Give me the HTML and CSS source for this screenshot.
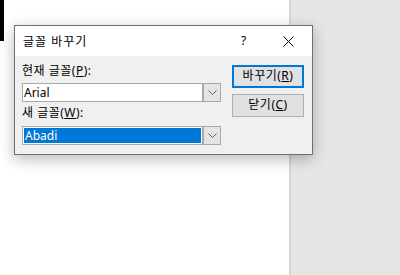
FILE: index.html
```html
<!DOCTYPE html>
<html>

<head>
    <meta charset="utf-8" />
    <title>글꼴 바꾸기</title>
    <link rel="stylesheet" href="styles.css">
</head>

<body>
    <div class="desk">
        <div class="doc">
            <div class="mark"></div>
        </div>
        <div class="side"></div>
    </div>

    <!-- dialog window over the document -->
    <div class="dlg">
        <div class="dlg-title">
            <span class="dlg-name">글꼴 바꾸기</span>
            <span class="dlg-help">?</span>
            <span class="dlg-close">
                <svg width="11" height="11" viewBox="0 0 11 11">
                    <path d="M0.5 0.5 L10.5 10.5 M10.5 0.5 L0.5 10.5" stroke="#000" stroke-width="1" fill="none" />
                </svg>
            </span>
        </div>
        <div class="dlg-body">
            <div class="fields">
                <div class="lbl">현재 글꼴(<u>P</u>):</div>
                <div class="combo">
                    <div class="combo-text">Arial</div>
                    <div class="combo-btn">
                        <svg width="9" height="5" viewBox="0 0 9 5">
                            <path d="M0.5 0.5 L4.5 4.5 L8.5 0.5" stroke="#606060" stroke-width="1" fill="none" />
                        </svg>
                    </div>
                </div>
                <div class="lbl lbl-second">새 글꼴(<u>W</u>):</div>
                <div class="combo">
                    <div class="combo-text"><span class="sel">Abadi</span></div>
                    <div class="combo-btn">
                        <svg width="9" height="5" viewBox="0 0 9 5">
                            <path d="M0.5 0.5 L4.5 4.5 L8.5 0.5" stroke="#606060" stroke-width="1" fill="none" />
                        </svg>
                    </div>
                </div>
            </div>
            <div class="btns">
                <div class="btn btn-default">바꾸기(<u>R</u>)</div>
                <div class="btn">닫기(<u>C</u>)</div>
            </div>
        </div>
    </div>
</body>

</html>
```

FILE: styles.css
```css
body {
    margin: 0;
    font-family: "Noto Sans", "Noto Sans CJK KR", sans-serif;
    font-size: 12px;
    color: #000;
}

.desk {
    display: flex;
    height: 275px;
}

.doc {
    width: 289px;
    background: #fff;
    border-right: 2px solid #d6d6d6;
}

.mark {
    width: 4px;
    height: 41px;
    background: #000;
}

.side {
    flex: 1;
    background: #e6e6e6;
}

/* dialog */
.dlg {
    position: absolute;
    left: 14px;
    top: 25px;
    width: 297px;
    height: 128px;
    border: 1px solid #6f6f6f;
    background: #f0f0f0;
    box-shadow: 0 4px 14px rgba(0, 0, 0, 0.28);
}

.dlg-title {
    display: flex;
    align-items: center;
    height: 30px;
    background: #fff;
    padding-left: 8px;
}

.dlg-name {
    flex: 1;
    line-height: 16px;
    padding-top: 1px;
    letter-spacing: 1px;
}

.dlg-help {
    width: 20px;
    margin-right: 22px;
    line-height: 16px;
}

.dlg-close {
    display: flex;
    width: 11px;
    margin-right: 18px;
}

.dlg-body {
    display: flex;
    gap: 11px;
    padding: 7px 8px 0 7px;
}

.fields {
    width: 199px;
}

.lbl {
    line-height: 16px;
    height: 16px;
    margin-bottom: 4px;
    letter-spacing: 0.5px;
}

.lbl-second {
    margin-top: 3px;
    margin-bottom: 5px;
}

.combo {
    display: flex;
    height: 19px;
    box-sizing: border-box;
    border: 1px solid #a9a9a9;
    background: #fff;
}

.combo-text {
    flex: 1;
    padding: 1px;
    line-height: 15px;
}

.sel {
    display: block;
    background: #0078d7;
    color: #fff;
    height: 15px;
    padding-left: 1px;
}

.combo-btn {
    display: flex;
    align-items: center;
    justify-content: center;
    width: 16px;
    background: #e5e5e5;
    border-left: 2px solid #a9a9a9;
}

.btns {
    display: flex;
    flex-direction: column;
    gap: 6px;
    margin-top: 2px;
}

.btn {
    width: 72px;
    height: 23px;
    box-sizing: border-box;
    border: 1px solid #adadad;
    background: #e1e1e1;
    text-align: center;
    line-height: 20px;
    letter-spacing: 0.5px;
}

.btn-default {
    border: 2px solid #0078d7;
    line-height: 18px;
}
```
